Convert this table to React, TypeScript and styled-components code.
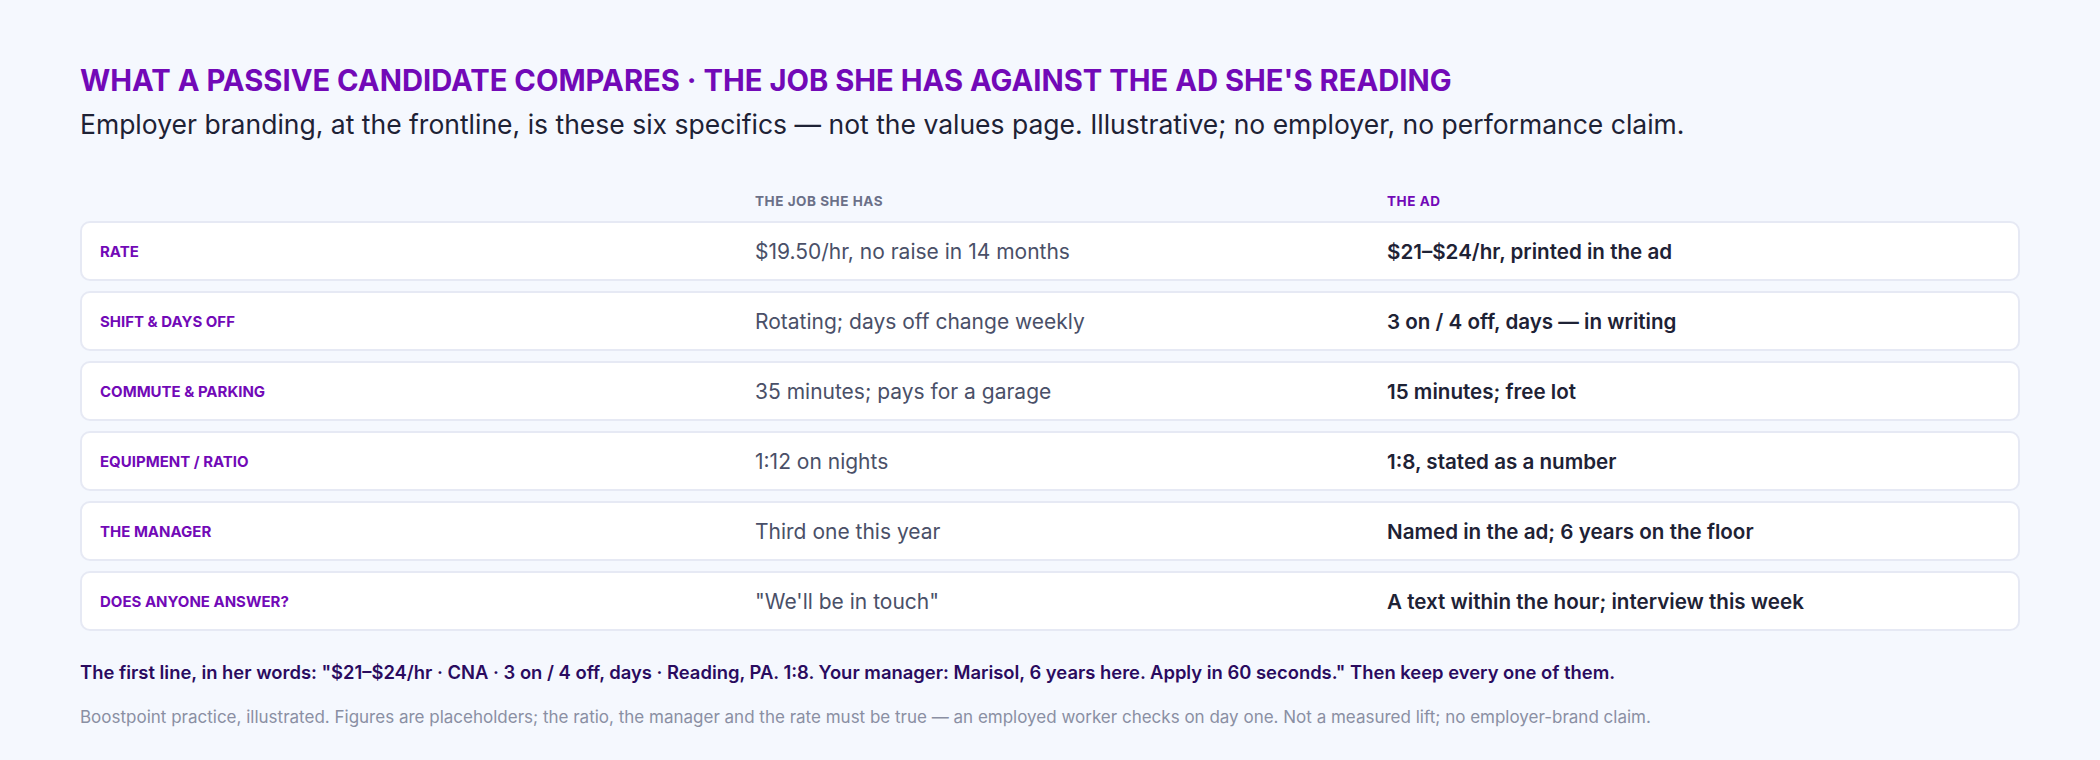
import React from "react";
import styled, { createGlobalStyle } from "styled-components";

const Global = createGlobalStyle`
  html, body { margin: 0; padding: 0; background: #f5f8fe; }
  body { font-family: Inter, "Noto Sans", "Liberation Sans", sans-serif; -webkit-font-smoothing: antialiased; }
  * { box-sizing: border-box; }
`;

const Page = styled.main`
  width: 2100px;
  height: 760px;
  padding: 64px 80px 0;
  background: #f5f8fe;
`;

const Title = styled.h1`
  margin: 0;
  font-size: 29.2px;
  line-height: 34px;
  font-weight: 700;
  color: #7209b7;
  text-transform: uppercase;
`;

const Subtitle = styled.p`
  margin: 10px 0 0;
  font-size: 26.5px;
  line-height: 32px;
  font-weight: 400;
  color: #1e2235;
`;

const Table = styled.section`
  margin-top: 49px;
  display: flex;
  flex-direction: column;
  gap: 10px;
`;

const Grid = styled.div`
  display: grid;
  grid-template-columns: 631fr 608fr 613fr;
  column-gap: 24px;
  align-items: center;
`;

const HeadRow = styled(Grid)`
  padding: 0 20px;
  height: 24px;
  margin-bottom: -2px;
`;

const ColHead = styled.div<{ $accent?: boolean }>`
  font-size: 13.5px;
  font-weight: 700;
  letter-spacing: 0.04em;
  text-transform: uppercase;
  color: ${(p) => (p.$accent ? "#7209b7" : "#6b7088")};
`;

const Row = styled(Grid)`
  height: 60px;
  padding: 0 18px;
  background: #ffffff;
  border: 2px solid #e6e9f4;
  border-radius: 10px;
`;

const Label = styled.div`
  font-size: 15px;
  font-weight: 700;
  color: #7209b7;
  text-transform: uppercase;
`;

const Has = styled.div`
  font-size: 21px;
  font-weight: 400;
  color: #4a5068;
`;

const Ad = styled.div`
  font-size: 20.6px;
  font-weight: 600;
  color: #1e2235;
`;

const Note = styled.p`
  margin: 28px 0 0;
  font-size: 18.4px;
  line-height: 26px;
  font-weight: 600;
  color: #2a0b5f;
`;

const Fine = styled.p`
  margin: 21px 0 0;
  font-size: 17px;
  line-height: 22px;
  font-weight: 400;
  color: #8a8fa3;
`;

const rows: [string, string, string][] = [
  ["Rate", "$19.50/hr, no raise in 14 months", "$21–$24/hr, printed in the ad"],
  ["Shift & days off", "Rotating; days off change weekly", "3 on / 4 off, days — in writing"],
  ["Commute & parking", "35 minutes; pays for a garage", "15 minutes; free lot"],
  ["Equipment / ratio", "1:12 on nights", "1:8, stated as a number"],
  ["The manager", "Third one this year", "Named in the ad; 6 years on the floor"],
  ["Does anyone answer?", "\"We'll be in touch\"", "A text within the hour; interview this week"],
];

export default function App() {
  return (
    <>
      <Global />
      <Page>
        <header>
          <Title>What a passive candidate compares · the job she has against the ad she's reading</Title>
          <Subtitle>
            Employer branding, at the frontline, is these six specifics — not the values page. Illustrative; no employer, no performance claim.
          </Subtitle>
        </header>
        <Table>
          <HeadRow>
            <span />
            <ColHead>The job she has</ColHead>
            <ColHead $accent>The ad</ColHead>
          </HeadRow>
          {rows.map(([label, has, ad]) => (
            <Row key={label}>
              <Label>{label}</Label>
              <Has>{has}</Has>
              <Ad>{ad}</Ad>
            </Row>
          ))}
        </Table>
        <Note>
          The first line, in her words: "$21–$24/hr · CNA · 3 on / 4 off, days · Reading, PA. 1:8. Your manager: Marisol, 6 years here. Apply in 60 seconds." Then keep every one of them.
        </Note>
        <Fine>
          Boostpoint practice, illustrated. Figures are placeholders; the ratio, the manager and the rate must be true — an employed worker checks on day one. Not a measured lift; no employer-brand claim.
        </Fine>
      </Page>
    </>
  );
}
